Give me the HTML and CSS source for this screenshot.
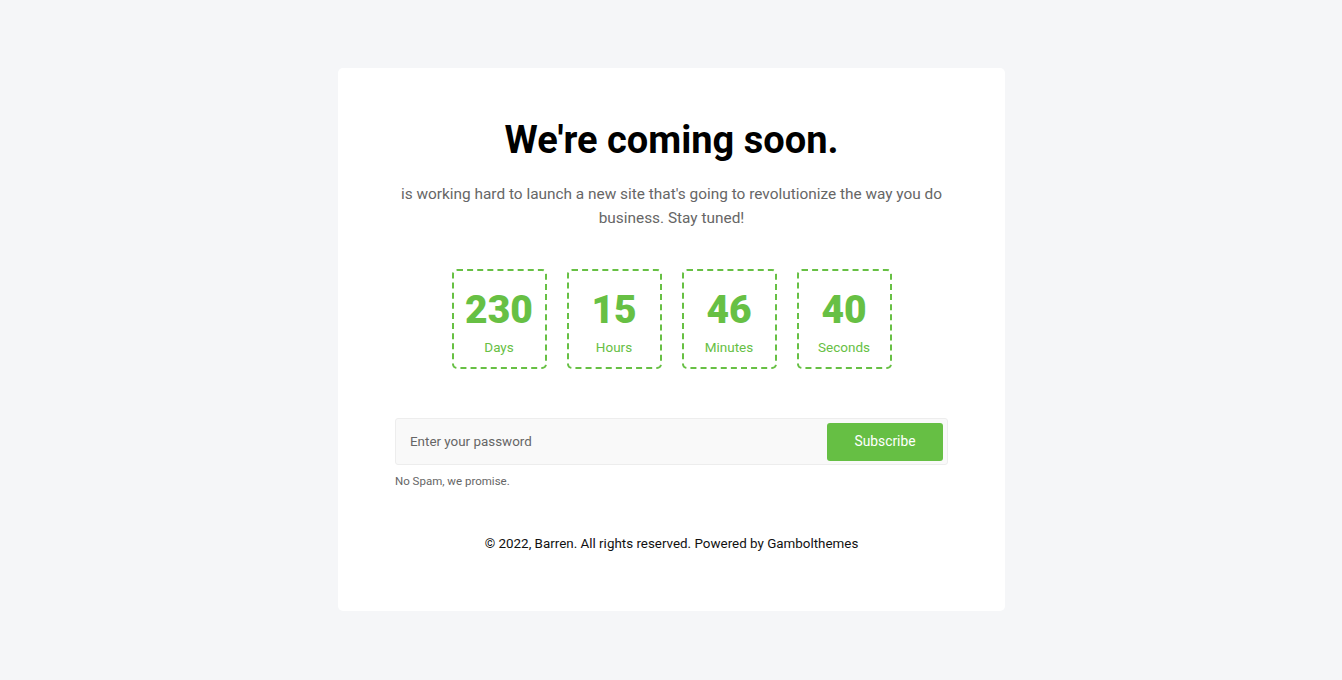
FILE: index.html
```html
<!DOCTYPE html>
<html lang="en">
<head>
<meta charset="utf-8">
<title>Coming soon</title>
<link rel="stylesheet" href="styles.css">
</head>
<body>
<main class="card">
  <h1 class="title">We're coming soon.</h1>
  <p class="lead">is working hard to launch a new site that's going to revolutionize the way you do business. Stay tuned!</p>
  <div class="countdown">
    <div class="unit"><span class="num">230</span><span class="label">Days</span></div>
    <div class="unit"><span class="num">15</span><span class="label">Hours</span></div>
    <div class="unit"><span class="num">46</span><span class="label">Minutes</span></div>
    <div class="unit"><span class="num">40</span><span class="label">Seconds</span></div>
  </div>
  <form class="form">
    <div class="field">
      <input class="input" type="password" placeholder="Enter your password">
      <button class="btn" type="button">Subscribe</button>
    </div>
    <p class="note">No Spam, we promise.</p>
  </form>
  <p class="footer">© 2022, Barren. All rights reserved. Powered by Gambolthemes</p>
</main>
</body>
</html>
```
FILE: styles.css
```css
* { box-sizing: border-box; }
html, body { margin: 0; padding: 0; }
body {
  background: #f5f6f8;
  font-family: Roboto, "Liberation Sans", Arial, sans-serif;
  color: #000;
  padding-top: 68px;
}
.card {
  width: 667px;
  height: 543px;
  margin-left: 338px;
  background: #fff;
  border-radius: 5px;
  padding: 48px 57px 0;
  display: flex;
  flex-direction: column;
  align-items: center;
}
.title {
  margin: 0;
  font-size: 38px;
  font-weight: 700;
  line-height: 48px;
  color: #000;
}
.lead {
  margin: 18px 0 0;
  font-size: 15.4px;
  line-height: 24px;
  color: #666;
  text-align: center;
  max-width: 553px;
}
.countdown {
  display: flex;
  gap: 20px;
  margin-top: 39px;
}
.unit {
  width: 95px;
  height: 100px;
  border: 2px dashed #67c044;
  border-radius: 5px;
  display: flex;
  flex-direction: column;
  align-items: center;
  color: #67c044;
}
.num {
  font-size: 39px;
  font-weight: 900;
  line-height: 44px;
  margin-top: 17px;
}
.label {
  font-size: 13.5px;
  line-height: 18px;
  margin-top: 6px;
}
.form {
  width: 553px;
  margin-top: 49px;
}
.field {
  display: flex;
  align-items: center;
  height: 47px;
  background: #f9f9f9;
  border: 1px solid #ededed;
  border-radius: 3px;
  padding: 0 4px 0 14px;
}
.input {
  flex: 1;
  border: 0;
  background: transparent;
  font-family: inherit;
  font-size: 13.4px;
  color: #333;
  outline: none;
  padding: 0;
}
.input::placeholder { color: #666; }
.btn {
  width: 116px;
  height: 38px;
  border: 0;
  border-radius: 3px;
  background: #66bf44;
  color: #fff;
  font-family: inherit;
  font-size: 13.8px;
  line-height: 36px;
  padding: 0 0 2px;
  cursor: pointer;
}
.note {
  margin: 8px 0 0;
  font-size: 11.5px;
  line-height: 16px;
  color: #666;
}
.footer {
  margin: 45px 0 0;
  font-size: 13.4px;
  line-height: 20px;
  color: #111;
}
```
